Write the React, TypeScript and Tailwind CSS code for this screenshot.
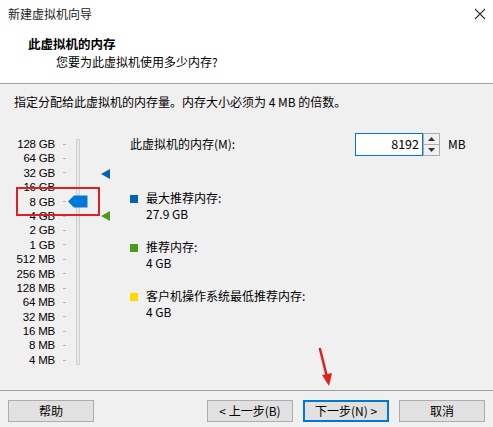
import React from "react";

const labels = ["128 GB","64 GB","32 GB","16 GB","8 GB","4 GB","2 GB","1 GB","512 MB","256 MB","128 MB","64 MB","32 MB","16 MB","8 MB","4 MB"];

export default function App() {
  return (
    <div className="w-[493px] h-[427px] bg-[#f0f0f0] flex flex-col text-[12px] text-[#000] overflow-hidden relative" style={{ fontFamily: '"Microsoft YaHei UI", "Noto Sans CJK SC", "Noto Sans", sans-serif' }}>
      {/* header */}
      <div className="h-[84px] bg-white border-b border-[#a0a0a0] flex flex-col">
        <div className="h-[28px] flex items-center justify-between pl-[8px] pr-[4px]">
          <span className="text-[12px] text-[#222]">新建虚拟机向导</span>
          <svg width="14" height="14" viewBox="0 0 14 14" className="mr-[2px]">
            <path d="M2 2 L12 12 M12 2 L2 12" stroke="#333" strokeWidth="1.1" />
          </svg>
        </div>
        <div className="pl-[28px] pt-[7px] font-bold text-[12.5px] leading-[18px]">此虚拟机的内存</div>
        <div className="pl-[56px] leading-[18px]">您要为此虚拟机使用多少内存?</div>
      </div>
      <div className="pl-[14px] pt-[9px] leading-[18px]">指定分配给此虚拟机的内存量。内存大小必须为 4 MB 的倍数。</div>

      <div className="flex flex-1 pt-[28px]">
        {/* slider */}
        <div className="relative w-[120px] h-[236px]">
          <div className="absolute left-0 top-[-2px] w-[55px] flex flex-col items-end" style={{ fontFamily: '"Liberation Sans", Arial, sans-serif' }}>
            {labels.map((l) => (
              <div key={l} className="h-[14.4px] leading-[14.4px] text-[11.5px] tracking-[-0.2px]">{l}</div>
            ))}
          </div>
          <div className="absolute left-[63px] top-[-2px] flex flex-col">
            {labels.map((l) => (
              <div key={l} className="h-[14.4px] flex items-center">
                <div className="w-[3px] h-px bg-[#b8b8b8]" />
              </div>
            ))}
          </div>
          <div className="absolute left-[76px] top-[0px] w-[4px] h-[226px] bg-[#e6e6e6] border border-[#d0d0d0]" />
          {/* thumb */}
          <svg className="absolute left-[68px] top-[56px]" width="20" height="13" viewBox="0 0 20 13">
            <path d="M0 6.5 L6 0.5 H19.5 V12.5 H6 Z" fill="#0078d7" />
          </svg>
          {/* blue triangle (max) */}
          <svg className="absolute left-[101px] top-[30px]" width="9" height="10" viewBox="0 0 9 10">
            <path d="M0 5 L9 0 V10 Z" fill="#0063b1" />
          </svg>
          {/* green triangle */}
          <svg className="absolute left-[101px] top-[72px]" width="9" height="10" viewBox="0 0 9 10">
            <path d="M0 5 L9 0 V10 Z" fill="#4c9a1a" />
          </svg>
          {/* red highlight */}
          <div className="absolute left-[16px] top-[48px] w-[84px] h-[29px] border-2 border-[#e02020]" />
        </div>

        {/* right side */}
        <div className="flex-1 flex flex-col pl-[10px]">
          <div className="flex items-center h-[22px] mt-[-6px]">
            <span className="w-[225px]">此虚拟机的内存(M):</span>
            <div className="flex h-[23px]">
              <div className="w-[68px] h-[23px] bg-white border border-[#0078d7] flex items-center justify-end pr-[3px] text-[12.5px]">8192</div>
              <div className="w-[17px] h-[23px] flex flex-col border border-[#adadad] bg-[#f0f0f0]">
                <div className="flex-1 flex items-center justify-center border-b border-[#adadad]">
                  <svg width="7" height="4" viewBox="0 0 7 4"><path d="M0 4 L3.5 0 L7 4 Z" fill="#333" /></svg>
                </div>
                <div className="flex-1 flex items-center justify-center">
                  <svg width="7" height="4" viewBox="0 0 7 4"><path d="M0 0 L3.5 4 L7 0 Z" fill="#333" /></svg>
                </div>
              </div>
            </div>
            <span className="ml-[8px]">MB</span>
          </div>

          <div className="flex flex-col mt-[35px] gap-[17px]">
            <div className="flex">
              <div className="w-[8px] h-[8px] bg-[#0063b1] mt-[5px] mr-[8px]" />
              <div className="flex flex-col leading-[16px]">
                <span>最大推荐内存:</span>
                <span>27.9 GB</span>
              </div>
            </div>
            <div className="flex">
              <div className="w-[8px] h-[8px] bg-[#4c9a1a] mt-[5px] mr-[8px]" />
              <div className="flex flex-col leading-[16px]">
                <span>推荐内存:</span>
                <span>4 GB</span>
              </div>
            </div>
            <div className="flex">
              <div className="w-[8px] h-[8px] bg-[#ffd800] mt-[5px] mr-[8px]" />
              <div className="flex flex-col leading-[16px]">
                <span>客户机操作系统最低推荐内存:</span>
                <span>4 GB</span>
              </div>
            </div>
          </div>
        </div>
      </div>

      {/* footer */}
      <div className="h-[37px] border-t border-[#a0a0a0] flex items-start pt-[9px] px-[8px]">
        <button className="w-[86px] h-[22px] bg-[#e1e1e1] border border-[#adadad] text-[12px]">帮助</button>
        <div className="flex-1" />
        <div className="flex gap-[10px]">
          <button className="w-[86px] h-[22px] bg-[#e1e1e1] border border-[#adadad] text-[12px]">&lt; 上一步(B)</button>
          <button className="w-[86px] h-[22px] bg-[#e1e1e1] border-2 border-[#0078d7] text-[12px]">下一步(N) &gt;</button>
          <button className="w-[86px] h-[22px] bg-[#e1e1e1] border border-[#adadad] text-[12px]">取消</button>
        </div>
      </div>

      {/* red arrow annotation */}
      <svg className="absolute left-[312px] top-[347px]" width="24" height="42" viewBox="0 0 24 42">
        <path d="M8 2 L15 30" stroke="#e02020" strokeWidth="2.5" strokeLinecap="round" />
        <path d="M10 28 L17 39 L20 26 Z" fill="#e02020" />
      </svg>
    </div>
  );
}
